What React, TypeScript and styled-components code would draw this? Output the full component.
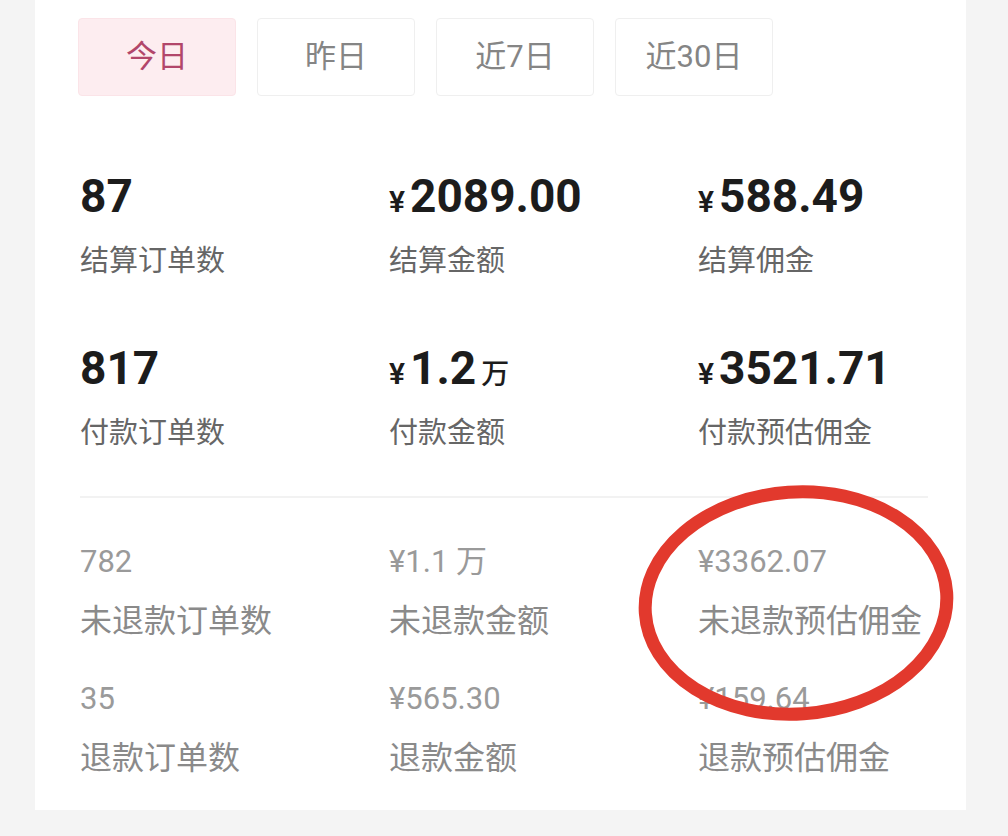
import React from "react";
import styled, { createGlobalStyle } from "styled-components";

const GlobalStyle = createGlobalStyle`
  html, body {
    margin: 0;
    padding: 0;
    background: #f4f4f4;
  }
  body {
    font-family: Roboto, "Noto Sans CJK SC", "Noto Sans", sans-serif;
  }
`;

const Page = styled.div`
  width: 1008px;
  height: 836px;
  overflow: hidden;
  background: #f4f4f4;
`;

const Card = styled.div`
  position: relative;
  width: 931px;
  margin-left: 35px;
  background: #ffffff;
  padding: 18px 38px 34px 45px;
  box-sizing: border-box;
`;

const Tabs = styled.div`
  display: flex;
  gap: 21px;
  margin-left: -2px;
`;

const Tab = styled.div<{ $active?: boolean }>`
  width: 158px;
  height: 78px;
  box-sizing: border-box;
  display: flex;
  align-items: center;
  justify-content: center;
  padding-bottom: 7px;
  border-radius: 4px;
  border: 1px solid ${(p) => (p.$active ? "#fbe4e8" : "#efefef")};
  background: ${(p) => (p.$active ? "#fdedf0" : "#ffffff")};
  color: ${(p) => (p.$active ? "#b2466a" : "#858585")};
  font-family: Roboto, "Noto Sans CJK SC", sans-serif;
  font-size: 31px;
`;

const Grid = styled.div<{ $rowGap: number; $top: number }>`
  display: grid;
  grid-template-columns: 309px 309px 1fr;
  row-gap: ${(p) => p.$rowGap}px;
  margin-top: ${(p) => p.$top}px;
`;

const Stat = styled.div`
  display: flex;
  flex-direction: column;
`;

const BigValue = styled.div`
  height: 56px;
  font-family: Roboto, "Noto Sans CJK SC", sans-serif;
  font-weight: 700;
  font-size: 46px;
  line-height: 56px;
  color: #1c1c1c;
  white-space: nowrap;
`;

const Yen = styled.span`
  font-size: 30px;
  line-height: 0;
  font-weight: 600;
  margin-right: 5px;
`;

const Unit = styled.span`
  font-size: 28px;
  line-height: 0;
  font-weight: 500;
  margin-left: 5px;
`;

const BigLabel = styled.div`
  margin-top: 14px;
  font-family: "Noto Sans CJK SC", sans-serif;
  font-size: 29px;
  line-height: 40px;
  color: #666666;
`;

const Divider = styled.div`
  height: 2px;
  background: #f2f2f2;
  margin-top: 46px;
`;

const SmallValue = styled.div`
  font-family: Roboto, "Noto Sans CJK SC", sans-serif;
  font-weight: 400;
  font-size: 31px;
  line-height: 40px;
  color: #9a9a9a;
  white-space: nowrap;
`;

const SmallLabel = styled.div`
  margin-top: 15px;
  font-family: "Noto Sans CJK SC", sans-serif;
  font-size: 32px;
  line-height: 42px;
  color: #8a8a8a;
`;

// hand-drawn red circle over the commission figure
const Mark = styled.svg`
  position: absolute;
  left: 597px;
  top: 477px;
  width: 330px;
  height: 250px;
  pointer-events: none;
`;

type Big = { value: string; yen?: boolean; unit?: string; label: string };
type Small = { value: string; label: string };

const primary: Big[] = [
  { value: "87", label: "结算订单数" },
  { value: "2089.00", yen: true, label: "结算金额" },
  { value: "588.49", yen: true, label: "结算佣金" },
  { value: "817", label: "付款订单数" },
  { value: "1.2", yen: true, unit: "万", label: "付款金额" },
  { value: "3521.71", yen: true, label: "付款预估佣金" },
];

const secondary: Small[] = [
  { value: "782", label: "未退款订单数" },
  { value: "¥1.1 万", label: "未退款金额" },
  { value: "¥3362.07", label: "未退款预估佣金" },
  { value: "35", label: "退款订单数" },
  { value: "¥565.30", label: "退款金额" },
  { value: "¥159.64", label: "退款预估佣金" },
];

const tabs = ["今日", "昨日", "近7日", "近30日"];

export default function App() {
  return (
    <Page>
      <GlobalStyle />
      <Card>
        <Tabs>
          {tabs.map((t, i) => (
            <Tab key={t} $active={i === 0}>
              {t}
            </Tab>
          ))}
        </Tabs>

        <Grid $rowGap={62} $top={72}>
          {primary.map((s) => (
            <Stat key={s.label}>
              <BigValue>
                {s.yen && <Yen>¥</Yen>}
                {s.value}
                {s.unit && <Unit>{s.unit}</Unit>}
              </BigValue>
              <BigLabel>{s.label}</BigLabel>
            </Stat>
          ))}
        </Grid>

        <Divider />

        <Grid $rowGap={40} $top={44}>
          {secondary.map((s) => (
            <Stat key={s.label}>
              <SmallValue>{s.value}</SmallValue>
              <SmallLabel>{s.label}</SmallLabel>
            </Stat>
          ))}
        </Grid>

        <Mark viewBox="0 0 330 250">
          <ellipse
            cx="164"
            cy="126"
            rx="151"
            ry="111"
            fill="none"
            stroke="#e2392d"
            strokeWidth="13"
            transform="rotate(-4 164 126)"
          />
        </Mark>
      </Card>
    </Page>
  );
}
